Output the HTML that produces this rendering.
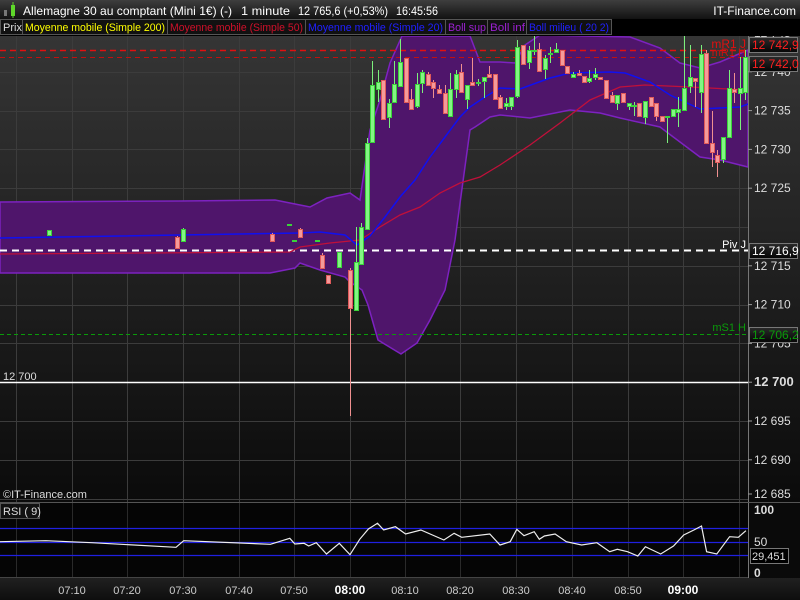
<!DOCTYPE html>
<html><head><meta charset="utf-8"><style>
body{margin:0;width:800px;height:600px;overflow:hidden;background:#000;font-family:"Liberation Sans",sans-serif;}
svg{display:block}
</style></head><body>
<svg id="s" width="800" height="600" xmlns="http://www.w3.org/2000/svg" font-family="Liberation Sans, sans-serif">
<defs>
<linearGradient id="bg" x1="0" y1="0" x2="0" y2="1"><stop offset="0" stop-color="#353535"/><stop offset="1" stop-color="#0b0b0b"/></linearGradient>
<linearGradient id="hd" x1="0" y1="0" x2="0" y2="1"><stop offset="0" stop-color="#3e3e3e"/><stop offset="1" stop-color="#121212"/></linearGradient>
<linearGradient id="ta" x1="0" y1="0" x2="0" y2="1"><stop offset="0" stop-color="#202020"/><stop offset="1" stop-color="#0e0e0e"/></linearGradient>
<linearGradient id="bx" x1="0" y1="0" x2="0" y2="1"><stop offset="0" stop-color="#2a2a2a"/><stop offset="1" stop-color="#050505"/></linearGradient>
</defs>
<rect x="0" y="36" width="800" height="466" fill="url(#bg)"/>
<g id="grid" stroke="#3c3c3c" stroke-width="1"></g>
<polygon fill="#4f156b" stroke="#7d22c0" stroke-width="1.5" points="0,202 180,201 275,200 295,204 310,207 327,198 350,193 360,200 370,130 380,100 390,63 402,36 470,36 480,62 500,62 515,63 525,45 540,35 630,37 660,48 680,63 700,68 720,62 748,50 748,167 720,160 700,157 660,127 620,118 600,113 570,110 530,118 500,115 490,117 475,127 470,130 455,240 445,290 430,320 417,343 401,354 378,340 368,305 362,290 350,282 345,277 320,270 300,263 295,268 270,273 0,273"/>
<line x1="0" y1="250.5" x2="748" y2="250.5" stroke="#fff" stroke-width="2" stroke-dasharray="7,5"/>
<line x1="0" y1="50.5" x2="748" y2="50.5" stroke="#e01010" stroke-width="1.5" stroke-dasharray="6,4"/>
<line x1="0" y1="57.5" x2="748" y2="57.5" stroke="#c01010" stroke-width="1" stroke-dasharray="5,4"/>
<line x1="0" y1="334.5" x2="748" y2="334.5" stroke="#0a9a0a" stroke-width="1" stroke-dasharray="4,3"/>
<line x1="0" y1="382.5" x2="748" y2="382.5" stroke="#fff" stroke-width="1.5"/>
<polyline fill="none" stroke="#c0103a" stroke-width="1.3" points="0,254 290,252 300,247 330,243 360,240 380,227 400,215 420,207 440,193 460,183 480,177 500,165 530,145 560,123 590,100 620,87 645,85 690,87 748,90"/>
<polyline fill="none" stroke="#1010f0" stroke-width="1.5" points="0,238 300,233 320,232 345,235 357,245 370,236 385,217 400,197 415,180 430,157 445,137 460,117 470,107 485,97 500,88 520,89 550,78 570,73 610,72 625,73 650,82 670,95 700,109 740,107 748,104"/>
<g id="cd"></g>
<text x="3" y="380" fill="#ddd" font-size="11">12 700</text>
<text x="3" y="498" fill="#ddd" font-size="11">©IT-Finance.com</text>
<text x="746" y="248" fill="#fff" font-size="11" text-anchor="end">Piv J</text>
<text x="746" y="331" fill="#0a9a0a" font-size="11" text-anchor="end">mS1 H</text>
<text x="746" y="48" fill="#e01010" font-size="12" text-anchor="end">mR1 J</text>
<text x="746" y="56" fill="#d01010" font-size="11" text-anchor="end">mR1 H</text>
<line x1="748.5" y1="36" x2="748.5" y2="578" stroke="#777"/>
<g id="ax" fill="#ddd" font-size="12"></g>
<rect x="0" y="503" width="748" height="75" fill="#050505"/>
<rect x="748" y="503" width="52" height="75" fill="#0a0a0a"/>
<line x1="748.5" y1="503" x2="748.5" y2="578" stroke="#777"/>
<line x1="0" y1="502.5" x2="800" y2="502.5" stroke="#555"/>
<g id="rg" stroke="#2a2a2a"></g>
<line x1="0" y1="528.5" x2="748" y2="528.5" stroke="#2020e0" stroke-width="1.2"/>
<line x1="0" y1="542.5" x2="748" y2="542.5" stroke="#2020e0" stroke-width="1.2"/>
<line x1="0" y1="555.5" x2="748" y2="555.5" stroke="#2020e0" stroke-width="1.2"/>
<line x1="0" y1="577.5" x2="748" y2="577.5" stroke="#444"/>
<polyline id="rsi" fill="none" stroke="#eee" stroke-width="1.2"/>
<rect x="0.5" y="503.5" width="39" height="15" fill="#111" stroke="#555"/>
<text x="3" y="515" fill="#ddd" font-size="11">RSI ( 9)</text>
<text x="754" y="514" fill="#ddd" font-size="12" font-weight="bold">100</text>
<text x="754" y="546" fill="#ddd" font-size="12">50</text>
<text x="754" y="577" fill="#ddd" font-size="12" font-weight="bold">0</text>
<rect x="750.5" y="548.5" width="38" height="15" fill="#000" stroke="#777"/>
<text x="752" y="560" fill="#ddd" font-size="11">29,451</text>
<rect x="0" y="578" width="800" height="22" fill="url(#ta)"/>
<g id="tx" fill="#ccc" font-size="11" text-anchor="middle"></g>
<rect x="0" y="0" width="800" height="19" fill="url(#hd)"/>
<rect x="4" y="10" width="3" height="6" fill="#777"/><rect x="11" y="5" width="4" height="11" fill="#5fd82a"/><line x1="13" y1="2" x2="13" y2="18" stroke="#5fd82a"/>
<g fill="#fff" font-size="12">
<text x="23" y="15" textLength="209" lengthAdjust="spacingAndGlyphs">Allemagne 30 au comptant (Mini 1€) (-)</text>
<text x="241" y="15" textLength="49" lengthAdjust="spacingAndGlyphs">1 minute</text>
<text x="298" y="15" textLength="90" lengthAdjust="spacingAndGlyphs">12 765,6 (+0,53%)</text>
<text x="396" y="15" textLength="42" lengthAdjust="spacingAndGlyphs">16:45:56</text>
<text x="796" y="15" text-anchor="end">IT-Finance.com</text>
</g>
<rect x="0" y="19" width="800" height="17" fill="#000"/>
<g font-size="11">
<rect x="0.5" y="19.5" width="22" height="15" fill="#111" stroke="#555"/><text x="3" y="31" fill="#ddd">Prix</text>
<rect x="22.5" y="19.5" width="145" height="15" fill="#111" stroke="#555"/><text x="25" y="31" fill="#ffff00" textLength="140" lengthAdjust="spacingAndGlyphs">Moyenne mobile (Simple 200)</text>
<rect x="167.5" y="19.5" width="138" height="15" fill="#111" stroke="#555"/><text x="170" y="31" fill="#d0102a" textLength="133" lengthAdjust="spacingAndGlyphs">Moyenne mobile (Simple 50)</text>
<rect x="305.5" y="19.5" width="140" height="15" fill="#111" stroke="#555"/><text x="308" y="31" fill="#2020ff" textLength="135" lengthAdjust="spacingAndGlyphs">Moyenne mobile (Simple 20)</text>
<rect x="445.5" y="19.5" width="42" height="15" fill="#111" stroke="#555"/><text x="448" y="31" fill="#9a20d0" textLength="38" lengthAdjust="spacingAndGlyphs">Boll sup</text>
<rect x="487.5" y="19.5" width="39" height="15" fill="#111" stroke="#555"/><text x="490" y="31" fill="#9a20d0" textLength="35" lengthAdjust="spacingAndGlyphs">Boll inf</text>
<rect x="526.5" y="19.5" width="85" height="15" fill="#111" stroke="#555"/><text x="529" y="31" fill="#2020ff" textLength="80" lengthAdjust="spacingAndGlyphs">Boll milieu ( 20 2)</text>
</g>
<rect x="749.5" y="37.5" width="48" height="15" fill="url(#bx)" stroke="#777"/><text x="752" y="49" fill="#ff2020" font-size="12">12 742,9</text>
<rect x="749.5" y="56.5" width="48" height="15" fill="url(#bx)" stroke="#777"/><text x="752" y="68" fill="#ff2020" font-size="12">12 742,0</text>
<rect x="749.5" y="243.5" width="48" height="15" fill="url(#bx)" stroke="#777"/><text x="752" y="255" fill="#fff" font-size="12">12 716,9</text>
<rect x="749.5" y="327.5" width="48" height="15" fill="url(#bx)" stroke="#777"/><text x="752" y="339" fill="#0a9a0a" font-size="12">12 706,2</text>
</svg>
<script>
var NS="http://www.w3.org/2000/svg";
function el(p,t,a,txt){var e=document.createElementNS(NS,t);for(var k in a)e.setAttribute(k,a[k]);if(txt)e.textContent=txt;document.getElementById(p).appendChild(e);return e;}
var vx=[16,72,127,183,239,294,350,405,460,516,572,628,683,739];
vx.forEach(function(x){el('grid','line',{x1:x+.5,y1:36,x2:x+.5,y2:502});el('rg','line',{x1:x+.5,y1:503,x2:x+.5,y2:578});});
for(var i=0;i<13;i++){var y=Math.round(33+i*38.8)+.5;if(y>36)el('grid','line',{x1:0,y1:y,x2:748,y2:y});}
var labs=["12 745","12 740","12 735","12 730","12 725","12 720","12 715","12 710","12 705","12 700","12 695","12 690","12 685"];
labs.forEach(function(l,i){var y=33+i*38.8;if(i==12)y=494;if(i==5)return;
el('ax','line',{x1:748,y1:y,x2:752,y2:y,stroke:'#999'});
var t=el('ax','text',{x:754,y:y+4},l);if(i==9){t.setAttribute('font-weight','bold');t.setAttribute('font-size','13');}});
var tl=["07:10","07:20","07:30","07:40","07:50","08:00","08:10","08:20","08:30","08:40","08:50","09:00"];
tl.forEach(function(l,i){var t=el('tx','text',{x:vx[i+1],y:594},l);if(l=="08:00"||l=="09:00"){t.setAttribute('font-weight','bold');t.setAttribute('fill','#fff');t.setAttribute('font-size','12');}});
var C=[[47,230,235,230,235,'g'],[175,237,248,236,249,'r'],[181,229,241,228,242,'g'],[270,234,241,233,241,'r'],[287,224,225,224,225,'g'],[292,240,241,240,241,'g'],[298,229,237,228,237,'r'],[315,240,241,240,241,'g'],
[320,255,268,253,268,'r'],[326,275,283,275,283,'r'],[337,252,267,252,267,'g'],[348,270,308,268,416,'r'],[354,262,310,227,310,'g'],[359,227,264,223,264,'g'],[365,143,229,138,229,'g'],[370,85,142,61,142,'g'],[376,82,89,70,102,'g'],[381,80,119,80,119,'r'],[387,103,117,99,128,'g'],[392,84,102,61,103,'g'],[398,62,86,39,86,'g'],[404,58,102,58,102,'r'],[409,99,109,89,109,'r'],[415,84,106,73,108,'g'],[420,72,83,70,93,'g'],[426,74,85,72,85,'r'],[431,82,88,80,98,'r'],[437,89,93,85,94,'r'],[443,93,113,85,113,'r'],[448,89,116,73,117,'g'],[454,74,89,70,98,'g'],[459,72,92,64,92,'r'],[465,85,99,85,109,'g'],[470,82,85,58,85,'r'],[476,82,83,79,86,'g'],[482,77,81,77,98,'g'],[487,74,77,66,77,'r'],[493,74,99,74,99,'r'],[498,97,108,95,108,'r'],
[504,103,106,98,110,'g'],[509,97,106,97,110,'g'],[515,47,96,40,98,'g'],[521,45,64,45,64,'r'],[527,50,62,46,69,'g'],[532,50,51,35,55,'g'],[537,49,71,43,71,'r'],[543,58,69,55,79,'g'],[548,53,54,47,63,'g'],[554,49,52,43,52,'g'],[560,50,65,50,65,'r'],[565,66,73,66,73,'r'],[571,74,77,72,78,'g'],[577,73,75,70,75,'r'],[582,76,82,76,82,'r'],[587,78,81,70,83,'g'],[593,74,77,68,80,'g'],[598,77,79,77,80,'r'],[604,80,98,80,98,'r'],[610,95,102,92,102,'r'],[615,95,103,95,110,'g'],[621,93,102,93,102,'r'],[627,103,106,103,110,'g'],[632,105,106,102,116,'g'],[637,103,116,103,116,'r'],[643,101,117,101,124,'g'],[649,97,106,97,106,'r'],[654,103,116,103,121,'r'],[660,116,121,116,121,'r'],[665,116,117,116,143,'g'],[671,109,116,109,116,'g'],[676,109,112,97,127,'g'],[682,88,110,31,110,'g'],[688,77,86,45,93,'g'],[693,78,81,78,107,'r'],[699,54,92,45,113,'g'],[704,53,143,50,143,'r'],[710,143,152,111,167,'r'],[715,155,162,150,177,'r'],[721,137,159,137,163,'g'],[727,88,137,70,137,'g'],[732,89,92,73,103,'r'],[738,88,93,57,130,'g'],[743,57,92,50,100,'g']];
C.forEach(function(c){var g=c[5]=='g',f=g?'#84f584':'#f59a9a',s=g?'#3ad23a':'#e05a5a';
el('cd','line',{x1:c[0]+2.5,y1:c[3],x2:c[0]+2.5,y2:c[4],stroke:g?'#7cf07c':'#f09090'});
var h=Math.max(1,c[2]-c[1]);el('cd','rect',{x:c[0]+.5,y:c[1]+.5,width:4,height:h,fill:f,stroke:s,'stroke-width':1});});
var R=[[0,185],[90,182],[180,188],[345,202],[360,182],[530,193],[568,175],[578,192],[596,190],[605,198],[620,188],[640,222],[665,190],[686,224],[705,178],[722,147],[740,130],[752,150],[775,140],[795,162],[825,150],[870,180],[890,160],[905,172],[960,162],[980,195],[1000,185],[1013,148],[1027,167],[1047,155],[1057,178],[1067,168],[1088,162],[1110,185],[1140,195],[1170,188],[1195,215],[1210,208],[1230,215],[1250,228],[1265,200],[1295,222],[1320,198],[1340,165],[1360,150],[1375,138],[1385,215],[1405,222],[1430,170],[1447,172],[1462,152]];
document.getElementById('rsi').setAttribute('points',R.map(function(p){return (p[0]*0.5102).toFixed(1)+','+(480+p[1]/3).toFixed(1)}).join(' '));
</script>
</body></html>
